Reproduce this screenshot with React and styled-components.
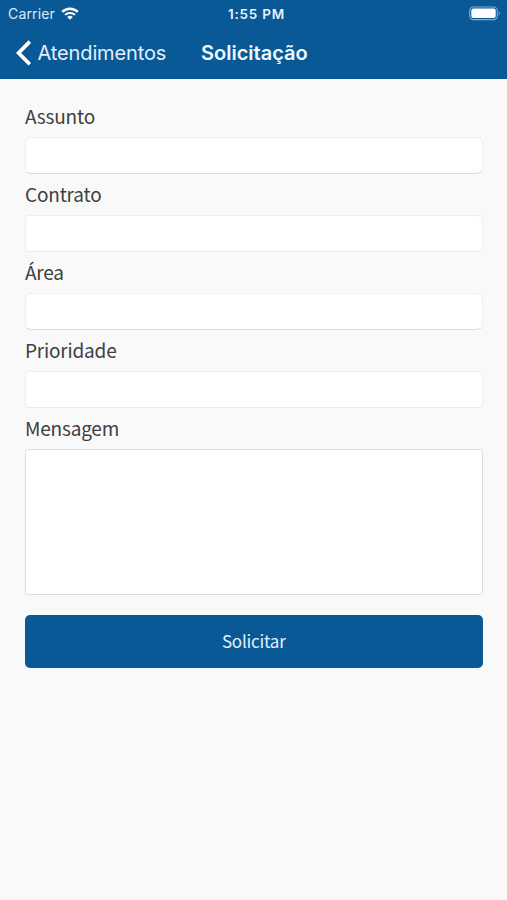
import React, { useState } from 'react'
import styled, { createGlobalStyle } from 'styled-components'

const blue = '#0a5997'

const FIELDS = [
  { name: 'assunto', label: 'Assunto', raised: true },
  { name: 'contrato', label: 'Contrato' },
  { name: 'area', label: 'Área', raised: true },
  { name: 'prioridade', label: 'Prioridade' },
]

const WifiIcon = () => (
  <svg width="18" height="13" viewBox="0 0 18 13" fill="none" aria-hidden="true">
    <path d="M1.2 4.9A11.2 11.2 0 0 1 16.8 4.9" stroke="#fff" strokeWidth="2.4" />
    <path d="M4 7.9A7.2 7.2 0 0 1 14 7.9" stroke="#fff" strokeWidth="2" />
    <path d="M6.2 10A4.1 4.1 0 0 1 11.8 10L9 12.8Z" fill="#fff" />
  </svg>
)

const BatteryIcon = () => (
  <svg width="32" height="15" viewBox="0 0 32 15" fill="none" aria-hidden="true">
    <rect x="0.7" y="1" width="27.6" height="12.6" rx="3.6" stroke="#fff" strokeOpacity="0.5" strokeWidth="1.1" />
    <rect x="2.3" y="2.6" width="24.4" height="9.4" rx="2" fill="#fff" />
    <path d="M29.8 5.2C31.2 5.8 31.2 8.8 29.8 9.4Z" fill="#fff" fillOpacity="0.5" />
  </svg>
)

const BackIcon = () => (
  <svg width="18" height="28" viewBox="0 0 18 28" fill="none" aria-hidden="true">
    <path d="M14.8 2.6L3.6 14L14.8 25.2" stroke="#fff" strokeWidth="3.7" />
  </svg>
)

const App = () => {
  const [values, setValues] = useState({})
  const onChange = e => setValues({ ...values, [e.target.name]: e.target.value })

  return (
    <Screen>
      <GlobalStyle />
      <Header>
        <StatusBar>
          <Carrier>Carrier <WifiIcon /></Carrier>
          <Clock>1:55 PM</Clock>
          <Battery><BatteryIcon /></Battery>
        </StatusBar>
        <NavBar>
          <BackButton type="button"><BackIcon /><span>Atendimentos</span></BackButton>
          <Title>Solicitação</Title>
        </NavBar>
      </Header>

      <Form onSubmit={e => e.preventDefault()}>
        {FIELDS.map(({ name, label, raised }) => (
          <Field key={name}>
            <Label htmlFor={name}>{label}</Label>
            <Input id={name} name={name} $raised={raised} value={values[name] || ''} onChange={onChange} />
          </Field>
        ))}
        <Label htmlFor="mensagem">Mensagem</Label>
        <Message id="mensagem" name="mensagem" value={values.mensagem || ''} onChange={onChange} />
        <Submit type="submit">Solicitar</Submit>
      </Form>
    </Screen>
  )
}

export default App


const GlobalStyle = createGlobalStyle`
  * {
    box-sizing: border-box;
  }
  body {
    margin: 0;
    background: #f9f9f9;
  }
  input, textarea, button {
    font-family: inherit;
  }
`

const Screen = styled.div`
  min-height: 100vh;
  background: #f9f9f9;
  color: #404040;
  font-family: 'Noto Sans CJK JP', 'Noto Sans', sans-serif;
`

const Header = styled.header`
  height: 79px;
  color: #fff;
  background: ${blue};
  font-family: Inter, 'Liberation Sans', sans-serif;
`

const StatusBar = styled.div`
  display: grid;
  grid-template-columns: 1fr auto 1fr;
  align-items: center;
  height: 27px;
  padding: 0 6px 0 8px;
`

const Carrier = styled.div`
  display: flex;
  align-items: center;
  gap: 6px;
  font-size: 14px;
  color: #dceaf7;
  letter-spacing: 0.15px;
`

const Clock = styled.div`
  padding-left: 4px;
  font-size: 13.5px;
  font-weight: 600;
  letter-spacing: 0.75px;
  color: #e6f1fb;
`

const Battery = styled.div`
  display: flex;
  justify-content: flex-end;
`

const NavBar = styled.div`
  display: flex;
  align-items: center;
  height: 51px;
  padding-left: 15px;
`

const BackButton = styled.button`
  display: flex;
  align-items: center;
  gap: 4.5px;
  width: 186px;
  padding: 0;
  border: 0;
  background: none;
  color: #e3f0fb;
  font-size: 20px;
  letter-spacing: -0.12px;
  text-align: left;
  cursor: pointer;
`

const Title = styled.h1`
  margin: 0;
  font-size: 20px;
  font-weight: 600;
  color: #f0f8ff;
`

const Form = styled.form`
  display: flex;
  flex-direction: column;
  padding: 22.4px 24.5px 0 25px;
`

const Field = styled.div`
  display: flex;
  flex-direction: column;
  height: 77.8px;
`

const Label = styled.label`
  height: 36px;
  font-size: 19px;
  line-height: 29px;
  letter-spacing: -0.2px;
`

const Input = styled.input`
  height: 37px;
  padding: 0 10px;
  border: 1px solid #eeeeee;
  border-bottom-color: ${({ $raised }) => ($raised ? '#dcdcdc' : '#ebebeb')};
  border-radius: ${({ $raised }) => ($raised ? '6px' : '4px')};
  background: #fff;
  font-size: 18px;
  outline: none;
`

const Message = styled.textarea`
  height: 146px;
  padding: 8px 10px;
  border: 1px solid #dcdcdc;
  border-radius: 3px;
  background: #fff;
  font-size: 18px;
  resize: none;
  outline: none;
`

const Submit = styled.button`
  height: 53px;
  margin-top: 20px;
  padding: 0 0 2px;
  border: 0;
  border-radius: 5px;
  background: ${blue};
  color: #e3f0fb;
  font-size: 17px;
  letter-spacing: -0.2px;
  cursor: pointer;
`
